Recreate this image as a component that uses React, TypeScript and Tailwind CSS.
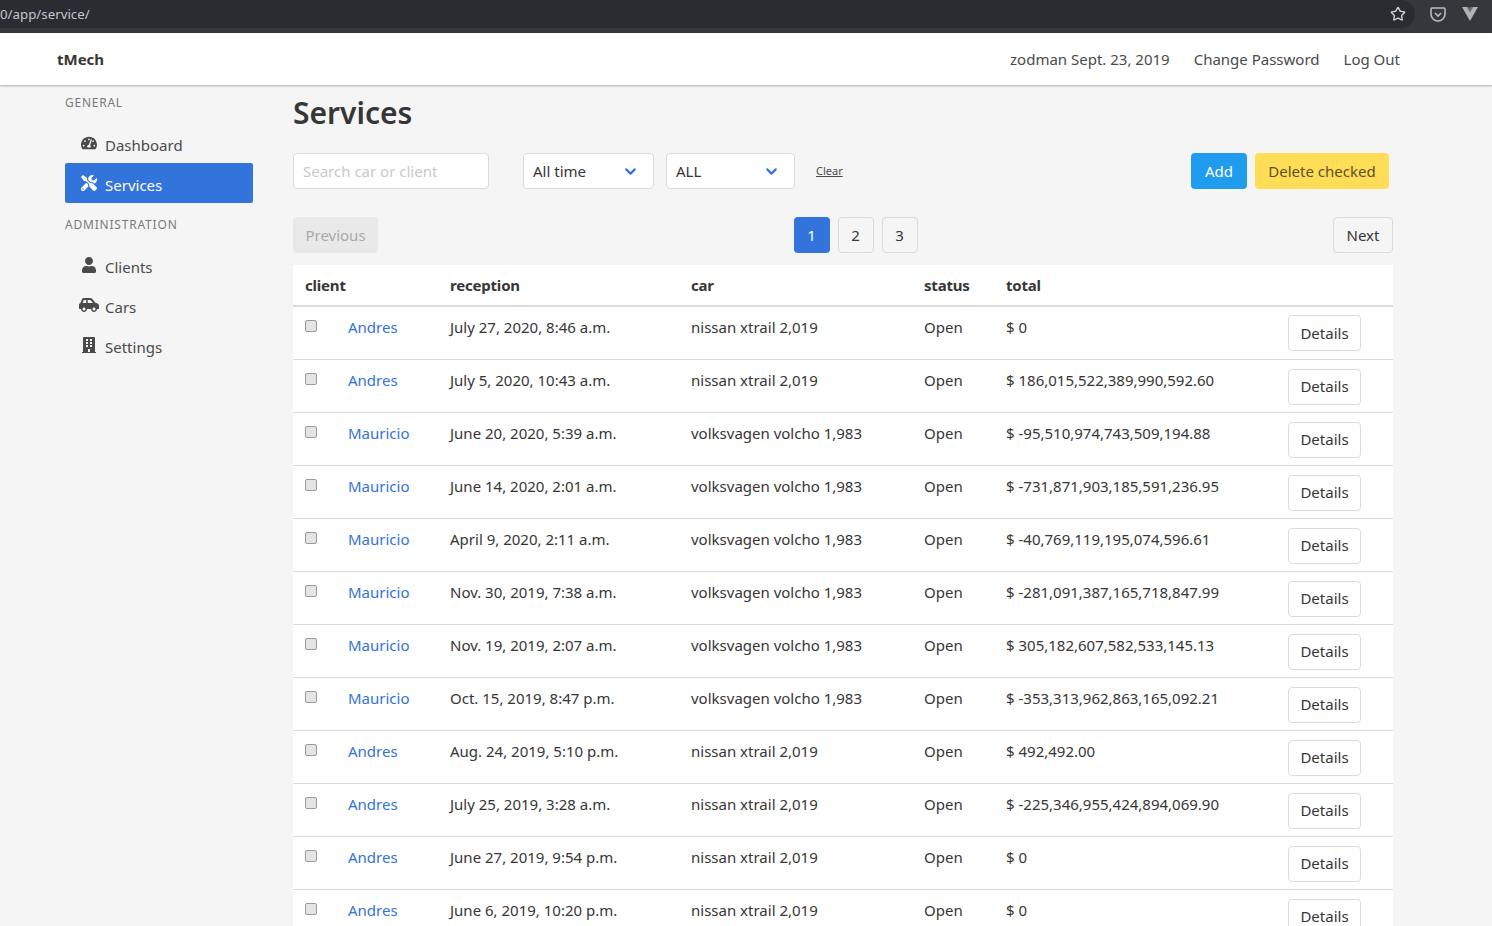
import { FaBuilding, FaCarSide, FaTachometerAlt, FaTools, FaUser } from 'react-icons/fa';
import { ChevronDown, Star } from 'lucide-react';

const rows = [
  ['Andres', 'July 27, 2020, 8:46 a.m.', 'nissan xtrail 2,019', '$ 0'],
  ['Andres', 'July 5, 2020, 10:43 a.m.', 'nissan xtrail 2,019', '$ 186,015,522,389,990,592.60'],
  ['Mauricio', 'June 20, 2020, 5:39 a.m.', 'volksvagen volcho 1,983', '$ -95,510,974,743,509,194.88'],
  ['Mauricio', 'June 14, 2020, 2:01 a.m.', 'volksvagen volcho 1,983', '$ -731,871,903,185,591,236.95'],
  ['Mauricio', 'April 9, 2020, 2:11 a.m.', 'volksvagen volcho 1,983', '$ -40,769,119,195,074,596.61'],
  ['Mauricio', 'Nov. 30, 2019, 7:38 a.m.', 'volksvagen volcho 1,983', '$ -281,091,387,165,718,847.99'],
  ['Mauricio', 'Nov. 19, 2019, 2:07 a.m.', 'volksvagen volcho 1,983', '$ 305,182,607,582,533,145.13'],
  ['Mauricio', 'Oct. 15, 2019, 8:47 p.m.', 'volksvagen volcho 1,983', '$ -353,313,962,863,165,092.21'],
  ['Andres', 'Aug. 24, 2019, 5:10 p.m.', 'nissan xtrail 2,019', '$ 492,492.00'],
  ['Andres', 'July 25, 2019, 3:28 a.m.', 'nissan xtrail 2,019', '$ -225,346,955,424,894,069.90'],
  ['Andres', 'June 27, 2019, 9:54 p.m.', 'nissan xtrail 2,019', '$ 0'],
  ['Andres', 'June 6, 2019, 10:20 p.m.', 'nissan xtrail 2,019', '$ 0'],
];

const SideItem = ({ icon, label, active }: { icon: React.ReactNode; label: string; active?: boolean }) => (
  <a
    className={
      active
        ? 'flex h-10 items-center rounded-[2px] bg-[#3273dc] text-white'
        : 'flex h-10 items-center text-[#4a4a4a]'
    }
  >
    <span className="mb-[1px] ml-[14px] flex w-[20px] justify-center">{icon}</span>
    <span className="mt-[5px] ml-[6px]">{label}</span>
  </a>
);

const Select = ({ label, width }: { label: string; width: string }) => (
  <div
    className={`flex h-[36px] items-center justify-between rounded-[4px] border border-[#dbdbdb] bg-white pl-[9px] pr-[14px] text-[#363636] ${width}`}
  >
    <span>{label}</span>
    <ChevronDown size={17} strokeWidth={3} className="text-[#3273dc]" />
  </div>
);

const PageButton = ({ label, current }: { label: string; current?: boolean }) => (
  <a
    className={
      current
        ? 'flex h-[36px] w-[36px] items-center justify-center rounded-[4px] bg-[#3273dc] text-white'
        : 'flex h-[36px] w-[36px] items-center justify-center rounded-[4px] border border-[#dbdbdb] text-[#363636]'
    }
  >
    {label}
  </a>
);

export default function App() {
  return (
    <div className="h-[926px] overflow-hidden bg-[#f5f5f5] font-['Noto_Sans','Open_Sans',sans-serif] text-[15px] text-[#4a4a4a]">
      <div className="flex h-[33px] bg-[#35373a] text-[#c4c7c9]">
        <div className="flex h-[28px] flex-1 items-center justify-between rounded-r-[14px] bg-[#292c30] pr-[9px]">
          <span className="mt-[2px] text-[13.3px]">0/app/service/</span>
          <Star size={16} strokeWidth={2} className="text-[#d5d7d9]" />
        </div>
        <div className="flex h-[28px] items-center">
          <svg width="16" height="15" viewBox="0 0 16 15" className="ml-[15px]">
            <path
              d="M2 1h12a1 1 0 0 1 1 1v5a7 7 0 0 1-14 0V2a1 1 0 0 1 1-1z"
              fill="none"
              stroke="#b8babc"
              strokeWidth="1.6"
            />
            <path d="M5 6l3 3 3-3" fill="none" stroke="#b8babc" strokeWidth="1.6" />
          </svg>
          <svg width="16" height="14" viewBox="0 0 16 14" className="mr-[14px] ml-[16px]">
            <path d="M0 0h5l3 5 3-5h5L8 14z" fill="#b0b2b4" />
            <path d="M5 0l3 5 3-5h-2L8 2 7 0z" fill="#77797b" />
          </svg>
        </div>
      </div>

      <nav className="relative flex h-[52px] items-center justify-between bg-white pl-[57px] pr-[92px] shadow-[0_1px_2px_rgba(0,0,0,0.3)]">
        <span className="font-bold text-[#363636]">tMech</span>
        <div className="flex gap-[24px] text-[#4a4a4a]">
          <span>zodman Sept. 23, 2019</span>
          <span>Change Password</span>
          <span>Log Out</span>
        </div>
      </nav>

      <div className="flex pl-[65px]">
        <aside className="w-[188px]">
          <p className="mt-[10px] text-[12px] leading-[15px] tracking-[0.75px] text-[#7a7a7a]">GENERAL</p>
          <div className="mt-[13px]">
            <SideItem icon={<FaTachometerAlt size={16} />} label="Dashboard" />
            <SideItem icon={<FaTools size={16} />} label="Services" active />
          </div>
          <p className="mt-[14px] text-[12px] leading-[15px] tracking-[0.8px] text-[#7a7a7a]">ADMINISTRATION</p>
          <div className="mt-[13px]">
            <SideItem icon={<FaUser size={16} />} label="Clients" />
            <SideItem icon={<FaCarSide size={20} />} label="Cars" />
            <SideItem icon={<FaBuilding size={16} />} label="Settings" />
          </div>
        </aside>

        <main className="ml-[40px] w-[1100px]">
          <h1 className="mt-[9px] text-[30px] leading-[38px] font-semibold text-[#363636]">Services</h1>

          <div className="mt-[21px] flex items-center">
            <input
              placeholder="Search car or client"
              className="h-[36px] w-[196px] rounded-[4px] border border-[#dbdbdb] bg-white px-[9px] placeholder:text-[#c9c9c9]"
            />
            <div className="ml-[34px]">
              <Select label="All time" width="w-[131px]" />
            </div>
            <div className="ml-[12px]">
              <Select label="ALL" width="w-[129px]" />
            </div>
            <a className="mt-[1px] ml-[21px] text-[11px] text-[#4a4a4a] underline">Clear</a>
            <div className="mr-[4px] ml-auto flex gap-[8px]">
              <a className="flex h-[36px] w-[56px] items-center justify-center rounded-[4px] bg-[#209cee] text-white">Add</a>
              <a className="flex h-[36px] w-[134px] items-center justify-center rounded-[4px] bg-[#ffdd57] text-[#5c5126]">
                Delete checked
              </a>
            </div>
          </div>

          <div className="mt-[28px] flex items-center justify-between">
            <a className="flex h-[36px] w-[85px] items-center justify-center rounded-[4px] bg-[#e9e9e9] text-[#a9a9a9]">
              Previous
            </a>
            <div className="flex gap-[8px]">
              <PageButton label="1" current />
              <PageButton label="2" />
              <PageButton label="3" />
            </div>
            <a className="flex h-[36px] w-[60px] items-center justify-center rounded-[4px] border border-[#dbdbdb] text-[#363636]">
              Next
            </a>
          </div>

          <table className="mt-[12px] w-full table-fixed bg-white text-[#363636]">
            <colgroup>
              <col className="w-[55px]" />
              <col className="w-[102px]" />
              <col className="w-[241px]" />
              <col className="w-[233px]" />
              <col className="w-[82px]" />
              <col className="w-[282px]" />
              <col />
            </colgroup>
            <thead>
              <tr className="h-[41px] border-b-2 border-[#dbdbdb] text-left tracking-[-0.2px]">
                <th colSpan={2} className="pl-[12px] font-bold">client</th>
                <th className="font-bold">reception</th>
                <th className="font-bold">car</th>
                <th className="font-bold">status</th>
                <th className="font-bold">total</th>
                <th />
              </tr>
            </thead>
            <tbody>
              {rows.map((row, i) => (
                <tr key={i} className="h-[53px] border-b border-[#dbdbdb] align-top">
                  <td className="pt-[13px] pl-[12px]">
                    <div className="h-[12px] w-[12px] rounded-[2px] border border-[#9a9a9a] bg-[#e4e4e4]" />
                  </td>
                  <td className="pt-[9px] text-[#3273dc]">{row[0]}</td>
                  <td className="pt-[9px]">{row[1]}</td>
                  <td className="pt-[9px]">{row[2]}</td>
                  <td className="pt-[9px]">Open</td>
                  <td className="pt-[9px]">{row[3]}</td>
                  <td className={i === 0 ? 'pt-[8px]' : 'pt-[9px]'}>
                    <a className="flex h-[36px] w-[73px] items-center justify-center rounded-[4px] border border-[#dbdbdb] bg-white">
                      Details
                    </a>
                  </td>
                </tr>
              ))}
            </tbody>
          </table>
        </main>
      </div>
    </div>
  );
}
